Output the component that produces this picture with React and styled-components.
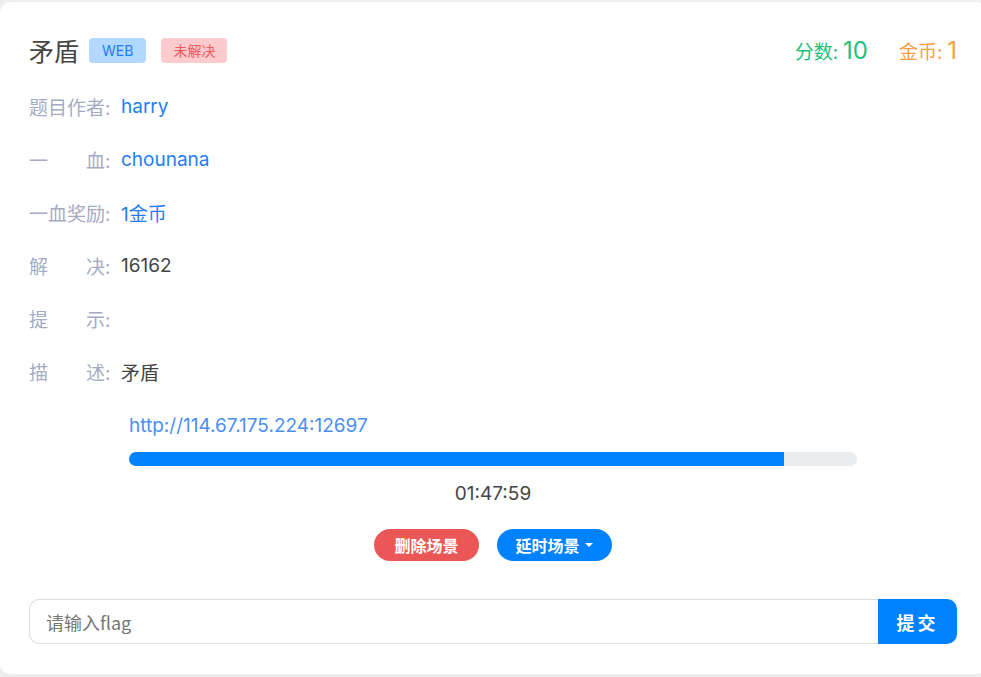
import React from 'react';
import styled, { createGlobalStyle } from 'styled-components';

const GlobalStyle = createGlobalStyle`
  html, body {
    margin: 0;
    padding: 0;
    background: #eeeeee;
    overflow: hidden;
  }
  body {
    font-family: Inter, "Noto Sans CJK SC", sans-serif;
    color: #444;
  }
`

const Card = styled.div`
  box-sizing: border-box;
  width: 986px;
  height: 672px;
  margin-top: 2px;
  padding: 28px 29px 0 29px;
  background: #fff;
  border-radius: 10px;
`

const Header = styled.div`
  display: flex;
  align-items: center;
  height: 40px;
  margin-bottom: 10px;
`

const Title = styled.h2`
  margin: 0 10px 0 0;
  font-size: 25px;
  font-weight: 400;
  color: #444;
  font-family: "Noto Sans CJK SC", sans-serif;
`

const Badge = styled.span`
  display: inline-flex;
  align-items: center;
  justify-content: center;
  height: 25px;
  padding: 0 ${p => p.$pad}px;
  margin-right: 15px;
  border-radius: 4px;
  font-size: 14px;
  background: ${p => p.$bg};
  color: ${p => p.$color};
`

const Stats = styled.div`
  margin-left: auto;
  display: flex;
  align-items: baseline;
  gap: 31px;
`

const Stat = styled.span`
  font-size: 19px;
  color: ${p => p.$color};
  font-family: "Noto Sans CJK SC", sans-serif;

  b {
    font-weight: 400;
    font-size: 24px;
    font-family: Inter, sans-serif;
    margin-left: 5px;
  }
`

const Row = styled.div`
  display: flex;
  align-items: center;
  height: 53px;
  font-size: 19px;
`

const Label = styled.span`
  width: 92px;
  color: #a4abc2;
  white-space: pre;
  font-family: "Noto Sans CJK SC", sans-serif;
`

const Value = styled.span`
  color: ${p => (p.$link ? '#1f7ef2' : '#444')};
  font-family: Inter, "Noto Sans CJK SC", sans-serif;
`

const Scene = styled.div`
  padding: 0 100px;
  margin-top: 15px;
`

const Url = styled.div`
  height: 26px;
  line-height: 26px;
  font-size: 19px;
  color: #4a8ff0;
`

const Track = styled.div`
  height: 14px;
  margin-top: 13px;
  background: #e9ecef;
  border-radius: 7px;
  overflow: hidden;
`

const Fill = styled.div`
  height: 100%;
  background: #0082ff;
`

const Time = styled.div`
  margin-top: 15px;
  height: 26px;
  line-height: 26px;
  text-align: center;
  font-size: 19px;
  color: #444;
`

const Actions = styled.div`
  display: flex;
  justify-content: center;
  gap: 18px;
  margin-top: 22px;
`

const Pill = styled.button`
  display: inline-flex;
  align-items: center;
  gap: 5px;
  height: 32px;
  padding: 0 ${p => p.$pad}px;
  border: none;
  border-radius: 16px;
  background: ${p => p.$bg};
  color: #fff;
  font-size: 16px;
  font-weight: 700;
  font-family: "Noto Sans CJK SC", sans-serif;
`

const Caret = styled.span`
  width: 0;
  height: 0;
  border-left: 4px solid transparent;
  border-right: 4px solid transparent;
  border-top: 4px solid #fff;
`

const FlagForm = styled.form`
  display: flex;
  margin: 38px 0 0 0;
  height: 45px;
`

const FlagInput = styled.input`
  flex: 1;
  box-sizing: border-box;
  height: 45px;
  padding: 0 16px;
  border: 1px solid #ddd;
  border-right: none;
  border-radius: 10px 0 0 10px;
  font-size: 18px;
  font-family: "Noto Sans CJK SC", sans-serif;
  outline: none;

  &::placeholder {
    color: #777;
  }
`

const Submit = styled.button`
  width: 79px;
  height: 45px;
  border: none;
  border-radius: 0 10px 10px 0;
  background: #0082ff;
  color: #fff;
  font-size: 18px;
  font-weight: 700;
  letter-spacing: 3px;
  font-family: "Noto Sans CJK SC", sans-serif;
`

const rows = [
  { label: '题目作者:', value: 'harry', link: true },
  { label: '一　　血:', value: 'chounana', link: true },
  { label: '一血奖励:', value: '1金币', link: true },
  { label: '解　　决:', value: '16162' },
  { label: '提　　示:', value: '' },
  { label: '描　　述:', value: '矛盾' },
]

export default function App() {
  const progress = 90;
  return (
    <>
      <GlobalStyle />
      <Card>
        <Header>
          <Title>矛盾</Title>
          <Badge $bg="#b3d8ff" $color="#1a7ff0" $pad={13}>WEB</Badge>
          <Badge $bg="#fccbcd" $color="#f0595f" $pad={12}>未解决</Badge>
          <Stats>
            <Stat $color="#22c07a">分数:<b>10</b></Stat>
            <Stat $color="#f7a046">金币:<b>1</b></Stat>
          </Stats>
        </Header>
        {rows.map(r => (
          <Row key={r.label}>
            <Label>{r.label}</Label>
            <Value $link={r.link}>{r.value}</Value>
          </Row>
        ))}
        <Scene>
          <Url>http://114.67.175.224:12697</Url>
          <Track>
            <Fill style={{ width: `${progress}%` }} />
          </Track>
          <Time>01:47:59</Time>
          <Actions>
            <Pill type="button" $bg="#eb5757" $pad={20}>删除场景</Pill>
            <Pill type="button" $bg="#0082ff" $pad={19}>延时场景<Caret /></Pill>
          </Actions>
        </Scene>
        <FlagForm onSubmit={e => e.preventDefault()}>
          <FlagInput placeholder="请输入flag" />
          <Submit type="submit">提交</Submit>
        </FlagForm>
      </Card>
    </>
  );
}
